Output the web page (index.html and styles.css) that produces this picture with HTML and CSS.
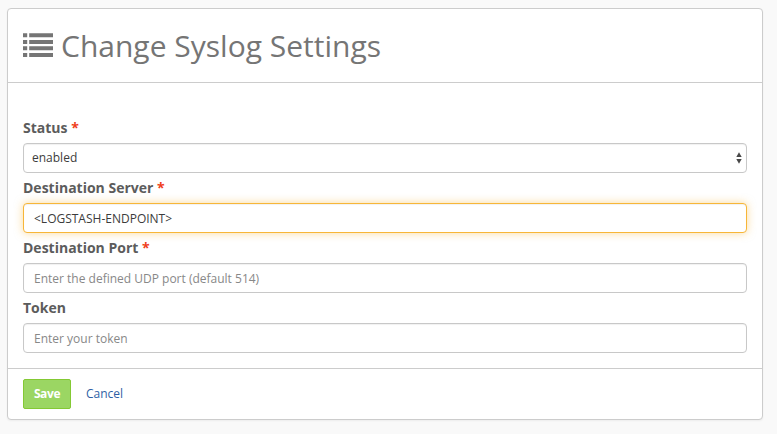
FILE: index.html
```html
<!DOCTYPE html>
<html lang="en">
<head>
<meta charset="utf-8">
<title>Change Syslog Settings</title>
<link rel="stylesheet" href="styles.css">
</head>
<body>
<form class="panel">
  <header class="panel-header">
    <svg class="list-icon" width="30" height="24" viewBox="0 0 30 24" fill="currentColor" aria-hidden="true">
      <path d="M0 .3h4.200v4H0zM6.200 .3H30v4H6.200zM0 7h4.200v4H0zM6.200 7H30v4H6.200zM0 13.300h4.200v4H0zM6.200 13.300H30v4H6.200zM0 19.900h4.200v4H0zM6.200 19.900H30v4H6.200z"/>
    </svg>
    <h1>Change Syslog Settings</h1>
  </header>
  <div class="panel-body">
    <label class="label" for="status">Status <span class="required">*</span></label>
    <div class="control select" id="status"><span>enabled</span>
      <svg class="arrows" width="6" height="12" viewBox="0 0 6 12" fill="#484848" aria-hidden="true"><path d="M.3 5 3 .3 5.700 5zM.3 7h5.400L3 11.700z"/></svg>
    </div>
    <label class="label" for="server">Destination Server <span class="required">*</span></label>
    <input class="control focused" id="server" type="text" value="&lt;LOGSTASH-ENDPOINT&gt;">
    <label class="label" for="port">Destination Port <span class="required">*</span></label>
    <input class="control" id="port" type="text" placeholder="Enter the defined UDP port (default 514)">
    <label class="label" for="token">Token</label>
    <input class="control" id="token" type="text" placeholder="Enter your token">
  </div>
  <footer class="panel-footer">
    <button class="save" type="button">Save</button>
    <a class="cancel">Cancel</a>
  </footer>
</form>
</body>
</html>
```

FILE: styles.css
```css
* { box-sizing: border-box; }
body {
  margin: 0;
  padding: 8px 14px 14px 7px;
  background: #f9f9f9;
  color: #444;
  font: 12px/20px "Open Sans", sans-serif;
}
.panel {
  height: 412px;
  border: 1px solid #ccc;
  border-radius: 4px;
  background: #fff;
  box-shadow: 0 1px 2px rgba(0, 0, 0, .05);
}
.panel-header {
  display: flex;
  align-items: center;
  height: 74px;
  padding: 0 15px;
  border-bottom: 1px solid #ccc;
  color: #757575;
}
.list-icon { margin: 0 8px 2px 0; }
h1 { margin: 0; font-size: 30px; font-weight: 400; line-height: 40px; }
.panel-body { height: 286px; padding: 35px 15px 0; border-bottom: 1px solid #ccc; }
.label {
  display: block;
  height: 20px;
  margin-bottom: 5px;
  color: #5c5c5c;
  font-size: 14px;
  font-weight: 700;
  line-height: 20px;
}
.required { color: #ef3e1b; }
.control {
  display: flex;
  align-items: center;
  width: 100%;
  height: 30px;
  margin: 0 0 5px;
  padding: 0 10px;
  border: 1px solid #c8c8c8;
  border-radius: 4px;
  outline: 0;
  background: #fff;
  box-shadow: inset 0 1px 1px rgba(0, 0, 0, .06);
  color: #3c3c3c;
  font: 12px/20px "Open Sans", sans-serif;
}
.control::placeholder { color: #888; opacity: 1; }
.select { justify-content: space-between; padding: 0 4px 0 8px; }
.focused {
  border-color: #f7b638;
  box-shadow: inset 0 1px 1px rgba(0, 0, 0, .06), 0 0 8px rgba(247, 182, 56, .5);
}
.panel-footer { display: flex; align-items: center; height: 50px; padding: 0 15px; }
.save {
  width: 48px;
  height: 30px;
  margin-right: 15px;
  padding: 0;
  border: 1px solid #84c934;
  border-radius: 2px;
  background: #9bd663;
  color: #fff;
  font: 700 12px/20px "Open Sans", sans-serif;
  letter-spacing: -.4px;
}
.cancel { color: #2f5fa5; }
```
